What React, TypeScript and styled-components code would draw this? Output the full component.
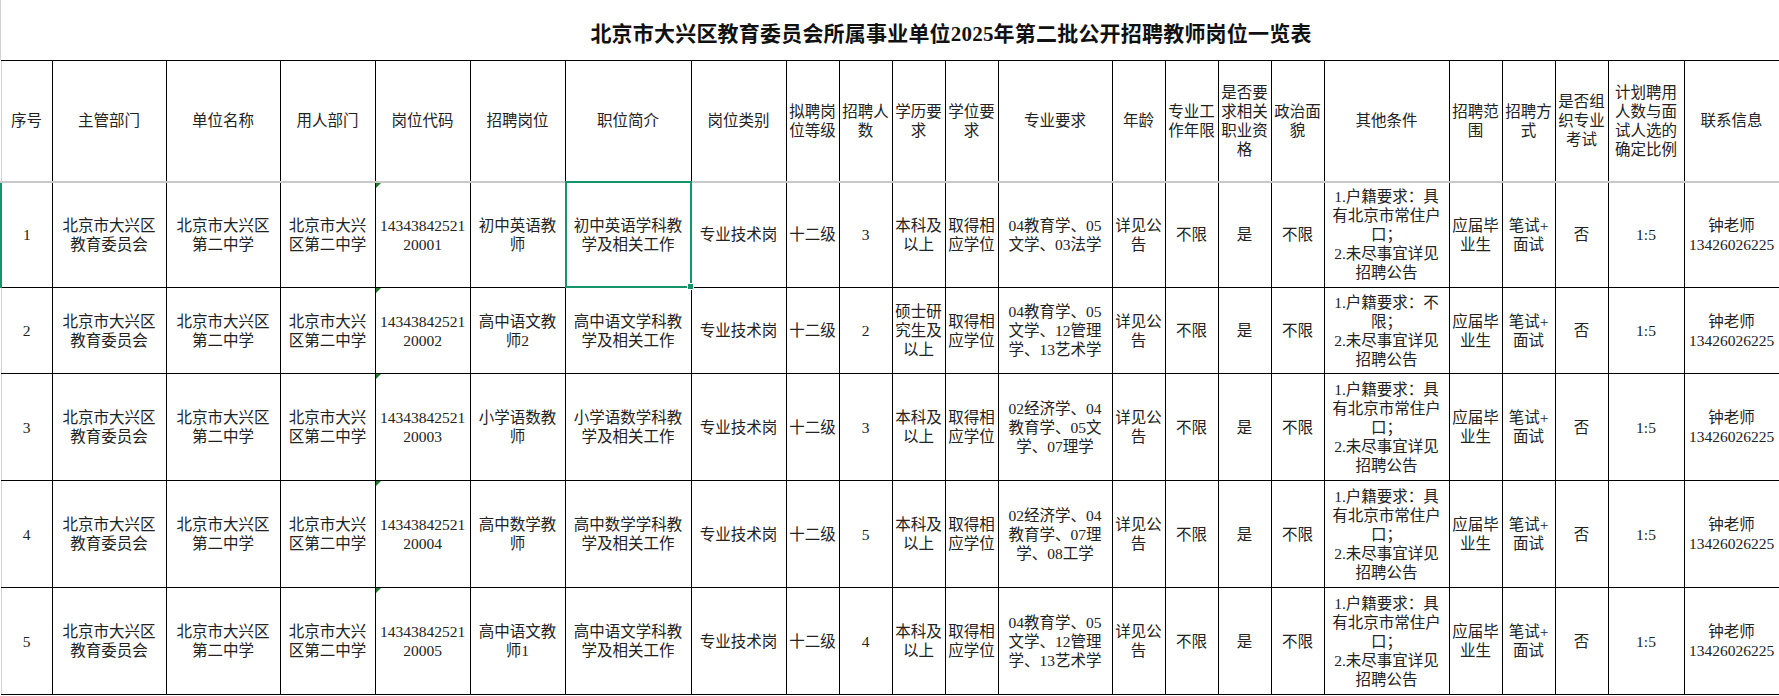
import React from 'react';
import styled, { createGlobalStyle } from 'styled-components';

const GlobalStyle = createGlobalStyle`
    html, body {
        margin: 0;
        padding: 0;
        background: #fff;
    }
    body {
        font-family: "Liberation Serif", "Noto Sans CJK SC", serif;
        color: #222;
    }
`;

const GREEN = '#17936a';

const columns: { w: number; title: string }[] = [
    { w: 51, title: '序号' },
    { w: 114, title: '主管部门' },
    { w: 114, title: '单位名称' },
    { w: 95, title: '用人部门' },
    { w: 95, title: '岗位代码' },
    { w: 95, title: '招聘岗位' },
    { w: 126, title: '职位简介' },
    { w: 95, title: '岗位类别' },
    { w: 53, title: '拟聘岗\n位等级' },
    { w: 53, title: '招聘人\n数' },
    { w: 53, title: '学历要\n求' },
    { w: 53, title: '学位要\n求' },
    { w: 114, title: '专业要求' },
    { w: 53, title: '年龄' },
    { w: 53, title: '专业工\n作年限' },
    { w: 53, title: '是否要\n求相关\n职业资\n格' },
    { w: 53, title: '政治面\n貌' },
    { w: 125, title: '其他条件' },
    { w: 53, title: '招聘范\n围' },
    { w: 53, title: '招聘方\n式' },
    { w: 53, title: '是否组\n织专业\n考试' },
    { w: 76, title: '计划聘用\n人数与面\n试人选的\n确定比例' },
    { w: 95, title: '联系信息' },
];

const HUKOU_BJ = '1.户籍要求：具\n有北京市常住户\n口；\n2.未尽事宜详见\n招聘公告';
const HUKOU_ANY = '1.户籍要求：不\n限；\n2.未尽事宜详见\n招聘公告';

type Job = {
    no: string;
    code: string;
    post: string;
    intro: string;
    count: string;
    edu: string;
    major: string;
    other: string;
    height: number;
};

const jobs: Job[] = [
    { no: '1', code: '20001', post: '初中英语教\n师', intro: '初中英语学科教\n学及相关工作', count: '3', edu: '本科及\n以上', major: '04教育学、05\n文学、03法学', other: HUKOU_BJ, height: 106 },
    { no: '2', code: '20002', post: '高中语文教\n师2', intro: '高中语文学科教\n学及相关工作', count: '2', edu: '硕士研\n究生及\n以上', major: '04教育学、05\n文学、12管理\n学、13艺术学', other: HUKOU_ANY, height: 86 },
    { no: '3', code: '20003', post: '小学语数教\n师', intro: '小学语数学科教\n学及相关工作', count: '3', edu: '本科及\n以上', major: '02经济学、04\n教育学、05文\n学、07理学', other: HUKOU_BJ, height: 107 },
    { no: '4', code: '20004', post: '高中数学教\n师', intro: '高中数学学科教\n学及相关工作', count: '5', edu: '本科及\n以上', major: '02经济学、04\n教育学、07理\n学、08工学', other: HUKOU_BJ, height: 107 },
    { no: '5', code: '20005', post: '高中语文教\n师1', intro: '高中语文学科教\n学及相关工作', count: '4', edu: '本科及\n以上', major: '04教育学、05\n文学、12管理\n学、13艺术学', other: HUKOU_BJ, height: 107 },
];

function rowCells(j: Job): string[] {
    return [
        j.no,
        '北京市大兴区\n教育委员会',
        '北京市大兴区\n第二中学',
        '北京市大兴\n区第二中学',
        '14343842521\n' + j.code,
        j.post,
        j.intro,
        '专业技术岗',
        '十二级',
        j.count,
        j.edu,
        '取得相\n应学位',
        j.major,
        '详见公\n告',
        '不限',
        '是',
        '不限',
        j.other,
        '应届毕\n业生',
        '笔试+\n面试',
        '否',
        '1:5',
        '钟老师\n13426026225',
    ];
}

export default function App() {
    return (
        <>
            <GlobalStyle />
            <Sheet>
                <Title>北京市大兴区教育委员会所属事业单位2025年第二批公开招聘教师岗位一览表</Title>
                <Grid>
                    <colgroup>
                        {columns.map((c, i) => (
                            <col key={i} style={{ width: c.w }} />
                        ))}
                    </colgroup>
                    <thead>
                        <HeadRow>
                            {columns.map((c, i) => (
                                <HeadCell key={i} $edge={i === 0}>{c.title}</HeadCell>
                            ))}
                        </HeadRow>
                    </thead>
                    <tbody>
                        {jobs.map((j, r) => (
                            <tr key={j.no} style={{ height: j.height }}>
                                {rowCells(j).map((text, i) => (
                                    <Cell
                                        key={i}
                                        $edge={i === 0 ? (r === 0 ? 'active' : 'plain') : undefined}
                                        $flag={i === 4}
                                    >
                                        {text}
                                        {r === 0 && i === 6 && (
                                            <Selection>
                                                <Handle />
                                            </Selection>
                                        )}
                                    </Cell>
                                ))}
                            </tr>
                        ))}
                    </tbody>
                </Grid>
            </Sheet>
        </>
    );
}

const Sheet = styled.div`
    width: 1779px;
`;

const Title = styled.div`
    height: 60px;
    box-sizing: border-box;
    border-left: 1px solid #d2d2d2;
    display: flex;
    align-items: center;
    justify-content: center;
    padding: 3px 0 0 122px;
    font-size: 21px;
    font-weight: 700;
    color: #111;
    letter-spacing: 0.2px;
`;

const Grid = styled.table`
    border-collapse: collapse;
    table-layout: fixed;
    width: 1778px;
    font-size: 15.5px;
    line-height: 19px;
`;

const HeadRow = styled.tr`
    height: 121px;
`;

const HeadCell = styled.th<{ $edge?: boolean }>`
    border: 1px solid #000;
    border-bottom: 2px solid #c9c9c9;
    ${p => p.$edge && 'border-left: 1px solid #d2d2d2;'}
    padding: 0 2px;
    font-weight: 400;
    text-align: center;
    vertical-align: middle;
    white-space: pre-line;
    color: #222;
`;

const Cell = styled.td<{ $edge?: 'active' | 'plain'; $flag?: boolean }>`
    position: relative;
    border: 1px solid #000;
    ${p => p.$edge === 'plain' && 'border-left: 1px solid #d2d2d2;'}
    ${p => p.$edge === 'active' && `border-left: 2px solid ${GREEN};`}
    padding: 0 2px;
    text-align: center;
    vertical-align: middle;
    white-space: pre-line;

    ${p => p.$flag && `
        &::before {
            content: '';
            position: absolute;
            top: 0;
            left: 0;
            border-top: 5px solid #1f7a2c;
            border-right: 5px solid transparent;
        }
    `}
`;

const Selection = styled.div`
    position: absolute;
    top: -2px;
    left: -1px;
    right: -1px;
    bottom: -1px;
    border: 2px solid ${GREEN};
    pointer-events: none;
`;

const Handle = styled.div`
    position: absolute;
    right: -4px;
    bottom: -4px;
    width: 5px;
    height: 5px;
    background: ${GREEN};
    border: 1px solid #fff;
`;
